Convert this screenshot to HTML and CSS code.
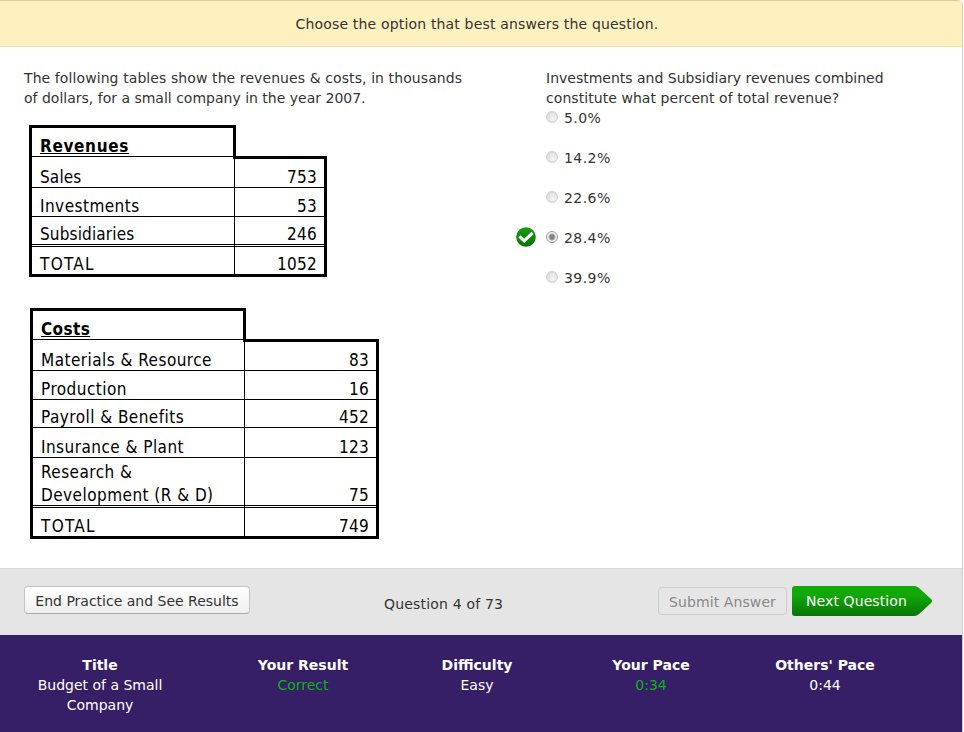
FILE: index.html
```html
<!DOCTYPE html>
<html lang="en">
<head>
<meta charset="utf-8">
<title>Practice Question</title>
<link rel="stylesheet" href="styles.css">
</head>
<body>
<div class="page">
  <header class="banner"><span class="banner-text">Choose the option that best answers the question.</span></header>
  <main class="content">
    <section class="passage">
      <p class="copy"><span class="intro-a">The following tables show the revenues &amp; costs, in thousands</span><br><span class="intro-b">of dollars, for a small company in the year 2007.</span></p>
      <div class="sheet revenues">
        <div class="sheet-head"><span class="head-rev">Revenues</span></div>
        <div class="sheet-body">
          <div class="cell name tight">Sales</div><div class="cell num">753</div>
          <div class="cell name">Investments</div><div class="cell num">53</div>
          <div class="cell name tight">Subsidiaries</div><div class="cell num">246</div>
          <div class="cell name total">TOTAL</div><div class="cell num total">1052</div>
        </div>
      </div>
      <div class="sheet costs">
        <div class="sheet-head"><span class="head-cost">Costs</span></div>
        <div class="sheet-body">
          <div class="cell name">Materials &amp; Resource</div><div class="cell num">83</div>
          <div class="cell name">Production</div><div class="cell num">16</div>
          <div class="cell name">Payroll &amp; Benefits</div><div class="cell num">452</div>
          <div class="cell name">Insurance &amp; Plant</div><div class="cell num">123</div>
          <div class="cell name"><span>Research &amp;</span><span>Development (R &amp; D)</span></div><div class="cell num">75</div>
          <div class="cell name total">TOTAL</div><div class="cell num total">749</div>
        </div>
      </div>
    </section>
    <section class="question">
      <p class="copy prompt"><span class="prompt-a">Investments and Subsidiary revenues combined</span><br><span class="prompt-b">constitute what percent of total revenue?</span></p>
      <ul class="options">
        <li class="option"><span class="mark"></span><span class="radio"></span><span class="percent">5.0%</span></li>
        <li class="option"><span class="mark"></span><span class="radio"></span><span class="percent">14.2%</span></li>
        <li class="option"><span class="mark"></span><span class="radio"></span><span class="percent">22.6%</span></li>
        <li class="option"><span class="mark"><svg width="20" height="20" viewBox="0 0 20 20"><defs><linearGradient id="ok" x1="0" y1="0" x2="0" y2="1"><stop offset="0" stop-color="#12a00c"/><stop offset="1" stop-color="#087306"/></linearGradient></defs><circle cx="10" cy="10" r="9.8" fill="url(#ok)"/><path d="M3.4 9.4 L8.2 13.9 L16.6 5.8" fill="none" stroke="#fff" stroke-width="3.2"/></svg></span><span class="radio checked"></span><span class="percent">28.4%</span></li>
        <li class="option"><span class="mark"></span><span class="radio"></span><span class="percent">39.9%</span></li>
      </ul>
    </section>
  </main>
  <div class="controls">
    <button class="btn end">End Practice and See Results</button>
    <span class="progress">Question 4 of 73</span>
    <button class="btn submit" disabled>Submit Answer</button>
    <button class="next"><svg class="next-shape" width="140" height="30" viewBox="0 0 140 30"><defs><linearGradient id="go" x1="0" y1="0" x2="0" y2="1"><stop offset="0" stop-color="#10a908"/><stop offset="0.3" stop-color="#10a908"/><stop offset="1" stop-color="#087505"/></linearGradient></defs><path d="M3 0H122Q125 0 127 2L139 13Q141 15 139 17L127 28Q125 30 122 30H3Q0 30 0 27V3Q0 0 3 0Z" fill="url(#go)"/></svg><span class="next-label">Next Question</span></button>
  </div>
  <footer class="stats">
    <div class="stat first"><b>Title</b><span>Budget of a Small Company</span></div>
    <div class="stat"><b>Your Result</b><span class="good">Correct</span></div>
    <div class="stat"><b>Difficulty</b><span>Easy</span></div>
    <div class="stat"><b>Your Pace</b><span class="good">0:34</span></div>
    <div class="stat"><b>Others' Pace</b><span>0:44</span></div>
  </footer>
</div>
</body>
</html>
```
FILE: styles.css
```css
* { box-sizing: border-box; }
body { margin: 0; background: #fff; font: 14px/20px "DejaVu Sans", Verdana, sans-serif; color: #333; overflow: hidden; }
p, ul { margin: 0; padding: 0; }
button { font: inherit; margin: 0; padding: 0; }
.page { width: 963px; height: 732px; border-right: 1px solid #ccc; border-top-right-radius: 5px; overflow: hidden; display: flex; flex-direction: column; }
.banner { height: 47px; background: #fef0bf; border-top: 1px solid #ddcf9d; border-bottom: 1px solid #eee0ac; border-top-right-radius: 4px; text-align: center; padding: 13px 8px 0 0; letter-spacing: .17px; }
.content { height: 521px; display: flex; padding: 21px 0 0 24px; }
.passage { width: 492px; }
.copy { white-space: nowrap; }
.intro-a { letter-spacing: .09px; }
.prompt-b { letter-spacing: .06px; }
.sheet { color: #000; font: 17px/19px "DejaVu Sans Condensed", "DejaVu Sans", sans-serif; font-stretch: condensed; }
.sheet-head { height: 34px; margin-bottom: -3px; border: 3px solid #000; border-bottom: 0; padding: 9px 0 0 8px; font-weight: bold; text-decoration: underline; }
.head-rev { letter-spacing: .65px; }
.head-cost { letter-spacing: .4px; }
.sheet-body { display: grid; border: 3px solid #000; border-top: 0; }
.cell { border-top: 1px solid #000; display: flex; flex-direction: column; justify-content: flex-end; gap: 4px; padding: 0 7px 0 8px; white-space: nowrap; }
.name { letter-spacing: .46px; }
.tight { letter-spacing: .15px; }
.num { border-left: 1px solid #000; text-align: right; letter-spacing: .3px; }
.sheet-body .num:nth-child(2) { border-top-width: 3px; }
.sheet-body .total { border-top: 3px double #000; }
.name.total { letter-spacing: 1.3px; }
.revenues { width: 298px; margin: 17px 0 0 5px; }
.revenues .sheet-head { width: 207px; }
.revenues .sheet-body { grid-template-columns: 202px 1fr; grid-template-rows: 31px 29px 28px 30px; }
.costs { width: 349px; margin: 31px 0 0 6px; }
.costs .sheet-head { width: 216px; }
.costs .sheet-body { grid-template-columns: 211px 1fr; grid-template-rows: 31px 29px 28px 30px 48px 31px; }
.prompt { margin-left: 30px; }
.options { list-style: none; display: flex; flex-direction: column; gap: 20px; }
.option { display: flex; height: 20px; }
.percent { letter-spacing: .45px; }
.mark { width: 20px; height: 20px; margin: -1px 10px 0 0; }
.mark svg { display: block; }
.radio { width: 12px; height: 12px; margin: 3px 6px 0 0; border-radius: 50%; border: 1px solid #d0d0d0; background: radial-gradient(circle at 60% 65%, #f4f4f4, #d6d6d6); }
.checked { border-color: #999; background: radial-gradient(circle, #808080 0 2px, #aaa 3px, #f4f4f4 4px); }
.controls { height: 67px; background: #e5e5e5; border-top: 1px solid #d8d8d8; display: flex; padding: 17px 0 0 24px; }
.btn { height: 28px; border: 1px solid #bbb; border-radius: 4px; white-space: nowrap; }
.end { width: 226px; padding-top: 2px; color: #333; border-color: #c4c4c4; border-bottom-color: #aaa; background: linear-gradient(#fff, #efefef); }
.progress { width: 119px; margin: 8px 155px 0 134px; white-space: nowrap; letter-spacing: .18px; }
.submit { width: 129px; margin-top: 1px; padding-top: 2px; color: #888; background: #e6e6e6; border-color: #ccc; letter-spacing: .1px; }
.next { position: relative; width: 140px; height: 30px; margin-left: 5px; border: 0; background: none; color: #fff; text-align: left; white-space: nowrap; }
.next-shape { position: absolute; left: 0; top: 0; }
.next-label { position: relative; padding-left: 14px; letter-spacing: .1px; }
.stats { flex: 1; background: #361f66; color: #fff; display: flex; padding: 20px 0 0; }
.stat { width: 174px; text-align: center; display: flex; flex-direction: column; }
.first { width: 200px; padding: 0 30px; margin-right: 16px; }
.good { color: #0db314; }
```
